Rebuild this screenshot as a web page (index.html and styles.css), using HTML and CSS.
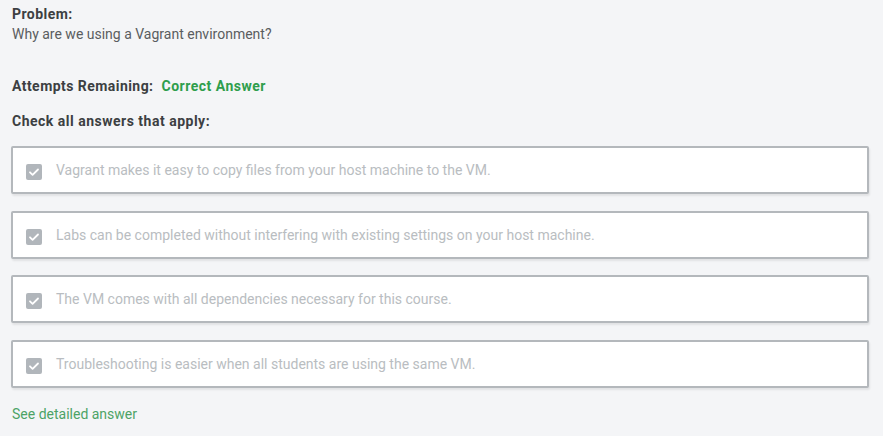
FILE: index.html
```html
<!DOCTYPE html>
<html>
<head>
<meta charset="utf-8">
<link rel="stylesheet" href="styles.css">
</head>
<body>
<div class="problem">
  <div class="label">Problem:</div>
  <div class="question">Why are we using a Vagrant environment?</div>
</div>
<div class="attempts"><span class="label">Attempts Remaining:</span><span class="correct">Correct Answer</span></div>
<div class="instr">Check all answers that apply:</div>
<div class="answers">
  <div class="answer"><span class="cb"><svg viewBox="0 0 16 16" width="16" height="16"><path d="M4 8.3l2.6 2.6L12 5.5" fill="none" stroke="#fff" stroke-width="1.8" stroke-linecap="round" stroke-linejoin="round"/></svg></span><span class="txt">Vagrant makes it easy to copy files from your host machine to the VM.</span></div>
  <div class="answer"><span class="cb"><svg viewBox="0 0 16 16" width="16" height="16"><path d="M4 8.3l2.6 2.6L12 5.5" fill="none" stroke="#fff" stroke-width="1.8" stroke-linecap="round" stroke-linejoin="round"/></svg></span><span class="txt">Labs can be completed without interfering with existing settings on your host machine.</span></div>
  <div class="answer"><span class="cb"><svg viewBox="0 0 16 16" width="16" height="16"><path d="M4 8.3l2.6 2.6L12 5.5" fill="none" stroke="#fff" stroke-width="1.8" stroke-linecap="round" stroke-linejoin="round"/></svg></span><span class="txt">The VM comes with all dependencies necessary for this course.</span></div>
  <div class="answer"><span class="cb"><svg viewBox="0 0 16 16" width="16" height="16"><path d="M4 8.3l2.6 2.6L12 5.5" fill="none" stroke="#fff" stroke-width="1.8" stroke-linecap="round" stroke-linejoin="round"/></svg></span><span class="txt">Troubleshooting is easier when all students are using the same VM.</span></div>
</div>
<a class="detail" href="#">See detailed answer</a>
</body>
</html>
```
FILE: styles.css
```css
html, body { margin: 0; padding: 0; }
body {
  background: #f4f5f7;
  font-family: Roboto, "Liberation Sans", sans-serif;
  font-size: 14px;
  line-height: 20px;
  color: #4a4d50;
  padding: 4px 14px 0 12px;
  width: 857px;
}
.label { font-weight: 700; color: #3c3f42; letter-spacing: 0.45px; }
.question { color: #5a5d60; }
.attempts { margin-top: 32px; }
.attempts .label { margin-right: 8px; }
.correct { color: #2e9e4c; font-weight: 700; letter-spacing: 0.5px; }
.instr { margin-top: 15px; font-weight: 700; color: #3c3f42; letter-spacing: 0.5px; }
.answers { margin-top: 15px; display: flex; flex-direction: column; gap: 16.67px; margin-left: -1px; }
.answer {
  height: 44px;
  background: #fff;
  border: 2px solid #b4b8bc;
  border-radius: 2px;
  box-shadow: 1px 2px 2px rgba(0,0,0,0.08);
  display: flex;
  align-items: center;
  padding-left: 13px;
}
.cb {
  width: 16px; height: 16px;
  background: #b1b6bb;
  border-radius: 2px;
  display: flex;
  margin-right: 14px;
  margin-top: 4px;
}
.txt { color: #b9bdc1; }
.detail {
  display: inline-block;
  margin-top: 16px;
  color: #4ca366;
  text-decoration: none;
}
```
